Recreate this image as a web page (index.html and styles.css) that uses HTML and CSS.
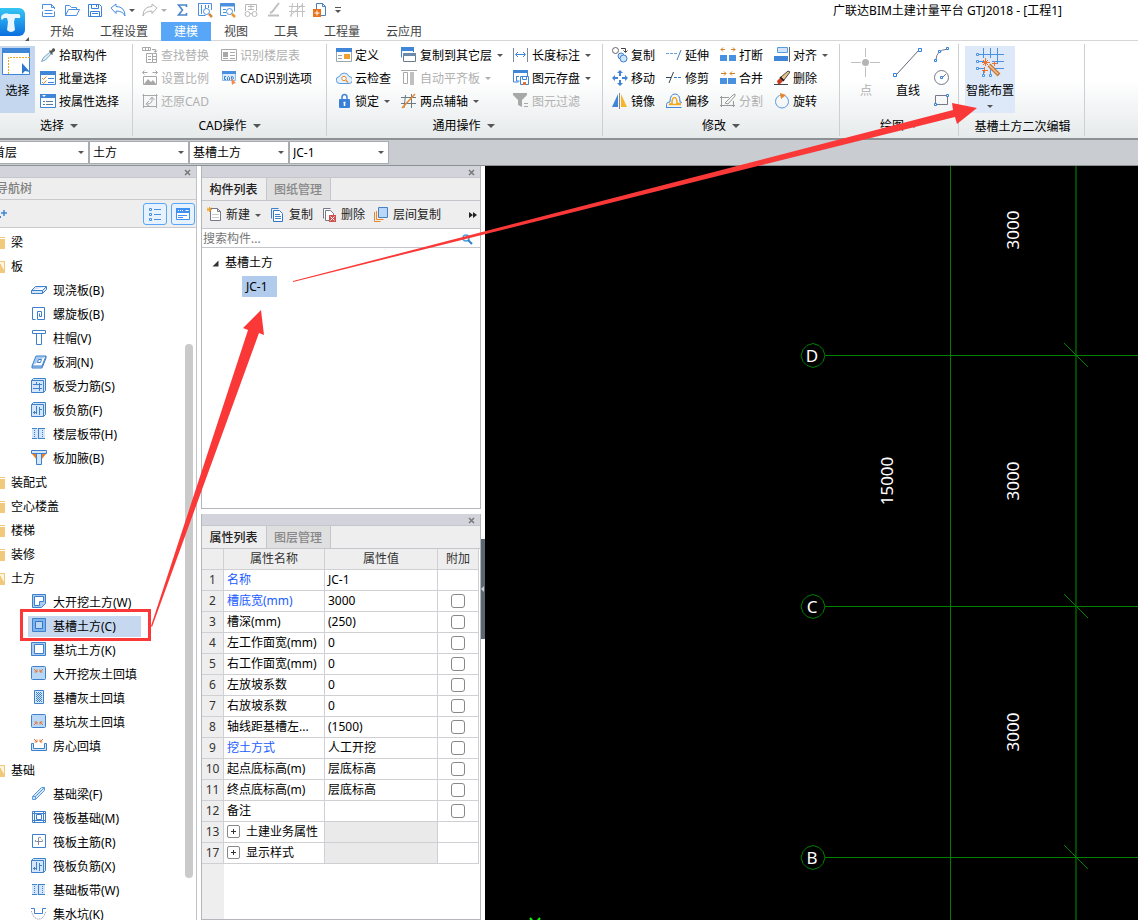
FILE: index.html
```html
<!DOCTYPE html>
<html lang="zh-CN">
<head>
    <meta charset="UTF-8">
    <meta name="viewport" content="width=device-width, initial-scale=1.0">
    <title>广联达BIM土建计量平台 GTJ2018 - [工程1]</title>
    <link rel="stylesheet" href="styles.css">
</head>
<body>
    <header class="top">
        <button class="logo" aria-label="主菜单">
            <svg width="36" height="36" viewBox="0 0 36 36">
                <defs><linearGradient id="lg" x1="0" y1="0" x2="0" y2="1"><stop offset="0" stop-color="#35c6f4"/><stop offset="1" stop-color="#0b6fe0"/></linearGradient></defs>
                <rect x="2" y="2" width="30" height="28" rx="6" fill="url(#lg)"/>
                <path d="M9 9q4-3 7-1h9q3 0 2 4h-5l-1 4 1 8q-4 4-8 0l1-8-1-4h-3l-2 2q-2-2 0-5z" fill="#eaf6ff"/>
                <path d="M36 31v5h-5z" fill="#555"/>
            </svg>
        </button>
        <div class="top-center">
            <div class="quick">
                <button aria-label="新建"><svg class="ic" viewBox="0 0 16 16"><path d="M1.500 7V2.500h9l3 3V7M10.500 2.500v3h3M1.500 9.500v5h12v-5M3.500 8.500h8M3.500 11.500h8" fill="none" stroke="#4a8fe0"/></svg></button>
                <button aria-label="打开"><svg class="ic" viewBox="0 0 16 16"><path d="M1.500 13.500v-10h4l2 2h5v2M1.500 13.500l3-6h11l-3 6z" fill="none" stroke="#4a8fe0"/></svg></button>
                <button aria-label="保存"><svg class="ic" viewBox="0 0 16 16"><path d="M1.500 2.500h11l2 2v10h-13zM4.500 2.500v4h7v-4M3.500 14.500v-5h9v5M9.500 3v2M5 11.500h6" fill="none" stroke="#3a80d8"/></svg></button>
                <button aria-label="撤销"><svg class="ic" viewBox="0 0 16 16"><path d="M1 6l5-4v2.500q9 0 9 9.500-2-5-9-5v2.500z" fill="#fff" stroke="#4a8fe0"/></svg><i class="caret"></i></button>
                <button class="off" aria-label="重做"><svg class="ic" viewBox="0 0 16 16"><path d="M15 6l-5-4v2.500q-9 0-9 9.500 2-5 9-5v2.500z" fill="#fff" stroke="#b4b4b4"/></svg><i class="caret"></i></button>
                <button aria-label="汇总计算"><svg class="ic" viewBox="0 0 16 16"><path d="M12.500 5V3h-8l4 5-4 5h8v-2" fill="none" stroke="#4a86cc" stroke-width="1.600"/></svg></button>
                <button aria-label="查看工程量"><svg class="ic" viewBox="0 0 16 16"><path d="M2 1.500h12.500V8M4.500 3v9M8.500 3v7M1.500 1v12.500h7M11.500 3v3" fill="none" stroke="#4a8fe0"/><circle cx="9.500" cy="9.500" r="3" fill="#fff" stroke="#4a8fe0"/><path d="M12 12l3 3" stroke="#d9863a" stroke-width="2.500"/></svg></button>
                <button aria-label="查看计算式"><svg class="ic" viewBox="0 0 16 16"><path d="M.500 1.500h14v3h-14z" fill="#4a8fe0"/><path d="M.500 1.500h14v8M.500 1.500v12h6M3 7.500h3M3 10.500h3" fill="none" stroke="#4a8fe0"/><circle cx="9.500" cy="9.500" r="3" fill="#fff" stroke="#4a8fe0"/><path d="M12 12l3 3" stroke="#e89a2c" stroke-width="2.500"/></svg></button>
                <button class="off" aria-label="查看三维"><svg class="ic" viewBox="0 0 16 16"><path d="M2.500 9V2.500h11V9M5 4.500h6M8 3v5M5 7.500h6M7 11.500h2" fill="none" stroke="#b8b8b8"/><circle cx="4.500" cy="12" r="2.500" fill="none" stroke="#b8b8b8"/><circle cx="11.500" cy="12" r="2.500" fill="none" stroke="#b8b8b8"/></svg></button>
                <button class="off" aria-label="编辑"><svg class="ic" viewBox="0 0 16 16"><path d="M13 1L6 10l-2 1M2 13.500h11" fill="none" stroke="#c0c0c0" stroke-width="2"/></svg></button>
                <button class="off" aria-label="轴网"><svg class="ic" viewBox="0 0 16 16"><path d="M3.500 1L2 15M8.500 1v14M13.500 1v14M0 4.500h16M0 9.500h16M1 14L14 2" fill="none" stroke="#c0c0c0"/></svg></button>
                <button aria-label="添加"><svg class="ic" viewBox="0 0 16 16"><path d="M4.500 7V1.500h6l3 3v9H9M10.500 1.500v3h3" fill="none" stroke="#4a7fc0"/><path d="M1 7h8v8H1z" fill="#e8721c"/><path d="M5 8.500v5M2.500 11h5" stroke="#fff"/></svg></button>
                <button class="more" aria-label="自定义快速访问"><i class="bar"></i><i class="caret"></i></button>
            </div>
            <nav class="tabs">
                <a href="#">开始</a><a href="#">工程设置</a><a href="#" class="on">建模</a><a href="#">视图</a><a href="#">工具</a><a href="#">工程量</a><a href="#">云应用</a>
            </nav>
        </div>
        <h1>广联达BIM土建计量平台 GTJ2018 - [工程1]</h1>
    </header>

    <section class="ribbon">
        <div class="group g-select">
            <div class="tools">
                <button class="big active">
                    <svg width="32" height="32" viewBox="0 0 32 32"><path d="M.500 2.500h27v26H.500z" fill="#fff" stroke="#3f86d8"/><path d="M0 2h28v5H0z" fill="#3f86d8"/><path d="M6.500 28V11.500H28" fill="none" stroke="#f0a820" stroke-dasharray="2 1"/><path d="M20 17v11l3-3 5 1z" fill="#2e78cc"/></svg>
                    <span>选择</span>
                </button>
                <div class="col">
                    <button><svg class="ic" viewBox="0 0 16 16"><path d="M1.500 14.500l2-4 6-5 1.500 1.500-5.500 6z" fill="#d8ecf8" stroke="#7fa8c0"/><path d="M9 4l1-1 1 1 2-3 2 1v2l-3 2 1 1-1 1z" fill="#555"/></svg>拾取构件</button>
                    <button><svg class="ic" viewBox="0 0 16 16"><path d="M.500 1.500h15v13H.500z" fill="#fff" stroke="#3f86d8"/><path d="M0 1h16v4H0z" fill="#3f86d8"/><path d="M8 8.500h6M8 12.500h6" stroke="#3f86d8"/><path d="M2 8l1.500 1.500 3-3M2 12l1.500 1.500 3-3" fill="none" stroke="#e8862c"/></svg>批量选择</button>
                    <button><svg class="ic" viewBox="0 0 16 16"><path d="M.500 1.500h15v13H.500z" fill="#fff" stroke="#3f86d8"/><path d="M0 1h16v4H0z" fill="#3f86d8"/><path d="M2 2h4L4 4z" fill="#fff"/><path d="M3 8.500h2M6 8.500h7M3 11.500h2M6 11.500h7" stroke="#5a7a98"/></svg>按属性选择</button>
                </div>
            </div>
            <p>选择<i class="caret"></i></p>
        </div>
        <div class="group g-cad">
            <div class="tools">
                <div class="col">
                    <button class="off"><svg class="ic" viewBox="0 0 16 16"><path d="M.500.500h8v3h-8zM3.500 .500v3M6.500 .500v3M10 2.500h3.500V5M12 3.500l1.500 2L15 3.500M4.500 6.500h6v9h-6zM10.500 6.500h4v9h-4M6 9.500h3M6 12.500h3M11 9.500h3M11 12.500h3" fill="none" stroke="#a8a8a8"/></svg>查找替换</button>
                    <button class="off"><svg class="ic" viewBox="0 0 16 16"><path d="M.500 2.500h5M10.500 2.500h5M2.500.500l-2 2 2 2M13.500.500l2 2-2 2M1.500 6.500h13v8h-13z" fill="none" stroke="#a8a8a8"/><path d="M2 14l4-5 3 3 2-2 3 4z" fill="#a8a8a8"/></svg>设置比例</button>
                    <button class="off"><svg class="ic" viewBox="0 0 16 16"><path d="M.500 2.500h15M1.500 1v14M14.500 1v14M1 13.500h14M5 11q6 0 5-6M7.500 7l2.500-3 2.500 3M7 8l-3 3 3 2" fill="none" stroke="#a8a8a8"/></svg>还原CAD</button>
                </div>
                <div class="col">
                    <button class="off"><svg class="ic" viewBox="0 0 16 16"><path d="M.500 2.500h15v11H.500zM9 5.500h5M9 8.500h5M9 11.500h5" fill="none" stroke="#a8a8a8"/><path d="M2 5h5v5H2zM2 11h5v1H2z" fill="#a8a8a8"/></svg>识别楼层表</button>
                    <button><svg class="ic" viewBox="0 0 16 16"><path d="M1.500 1.500h13v9h-13z" fill="#dcebfa" stroke="#8fbcec"/><path d="M1 1h14v3H1z" fill="#4a90e0"/><path d="M5 6.500H3.500v3H5M6.500 10V7.500l1-1 1 1V10M10.500 6.500h1l1 1.500-1 1.500h-1z" fill="none" stroke="#3a80d0"/><path d="M10 8l5 5-2 .5L11 15z" fill="#f08a50"/></svg>CAD识别选项</button>
                </div>
            </div>
            <p>CAD操作<i class="caret"></i></p>
        </div>
        <div class="group g-common">
            <div class="tools">
                <div class="col">
                    <button><svg class="ic" viewBox="0 0 16 16"><path d="M.500 1.500h15v13H.500z" fill="#fff" stroke="#9aa6b2"/><path d="M0 1h16v4H0z" fill="#3f86d8"/><path d="M2 8.500h4M2 11.500h4" stroke="#9aa6b2"/><path d="M8 7h6v5H8z" fill="#f0a030"/></svg>定义</button>
                    <button><svg class="ic" viewBox="0 0 16 16"><path d="M4 13.500a3.500 3.500 0 0 1-.500-7 5 5 0 0 1 9.500 0 3.500 3.500 0 0 1 0 7H4" fill="#e4f1fd" stroke="#5a9ae0"/><circle cx="8" cy="8.500" r="2.200" fill="#fff" stroke="#e8862c"/><path d="M10 10.500l2 2" stroke="#e8862c" stroke-width="1.500"/></svg>云检查</button>
                    <button><svg class="ic" viewBox="0 0 16 16"><path d="M6 7V4.500a2.500 3 0 0 1 5 0V7" fill="none" stroke="#3f86d8" stroke-width="1.500"/><rect x="3" y="6" width="11" height="9" rx="1" fill="#3a80d8"/><path d="M8.500 9v4M7.500 9.500h2" stroke="#fff" stroke-width="1.500"/></svg>锁定<i class="caret"></i></button>
                </div>
                <div class="col">
                    <button><svg class="ic" viewBox="0 0 16 16"><path d="M.500 10.500v-9h12V5" fill="#fff" stroke="#3f86d8"/><path d="M0 0h13v4H0z" fill="#3f86d8"/><path d="M2.500 6.500h12v8h-12z" fill="#fff" stroke="#6a7a88"/><path d="M2 6h13v3H2z" fill="#6a8aa8"/></svg>复制到其它层<i class="caret"></i></button>
                    <button class="off"><svg class="ic" viewBox="0 0 16 16"><path d="M0 .500h16M2.500 2.500h4v11h-4z" fill="none" stroke="#a8a8a8"/><path d="M9 2h4v13H9z" fill="#c0c0c0"/></svg>自动平齐板<i class="caret"></i></button>
                    <button><svg class="ic" viewBox="0 0 16 16"><path d="M4.500 2L3 15M10.500 1v14M0 4.500h15M0 10.500h15" stroke="#6a7a88" fill="none"/><path d="M1 15L14 1" stroke="#e8862c" stroke-width="1.500"/></svg>两点辅轴<i class="caret"></i></button>
                </div>
                <div class="col">
                    <button><svg class="ic" viewBox="0 0 16 16"><path d="M.500 1v14M14.500 1v14" stroke="#7a8a98"/><path d="M3 7.500h9M5 5L2.500 7.500 5 10M10 5l2.500 2.500L10 10" fill="none" stroke="#3f86d8"/></svg>长度标注<i class="caret"></i></button>
                    <button><svg class="ic" viewBox="0 0 16 16"><path d="M.500 12V1.500h14V6M3 6.500h3M3.500 6v5h3M.500 12h5" fill="none" stroke="#3f86d8"/><path d="M0 0h15v3H0z" fill="#3f86d8"/><path d="M7.500 6.500h8v8h-8z" fill="#fff" stroke="#3f86d8"/><path d="M9.500 6.500v3h4v-3" fill="none" stroke="#3f86d8"/><path d="M10 12h3v3h-3z" fill="#e8722c"/></svg>图元存盘<i class="caret"></i></button>
                    <button class="off"><svg class="ic" viewBox="0 0 16 16"><path d="M0 0h14v2L9 7v7l-4-2V7L0 2z" fill="#a8a8a8"/><path d="M11 10.500h4M11 13.500h4" stroke="#a8a8a8"/></svg>图元过滤</button>
                </div>
            </div>
            <p>通用操作<i class="caret"></i></p>
        </div>
        <div class="group g-modify">
            <div class="tools">
                <div class="col">
                    <button><svg class="ic" viewBox="0 0 16 16"><circle cx="3.500" cy="3.500" r="3" fill="#fff" stroke="#666"/><path d="M9 1.500h4.500V5M11.500 3.500l2 2 2-2" fill="none" stroke="#444"/><circle cx="9" cy="9" r="3" fill="#cfe4f8" stroke="#3a80d0"/><circle cx="11.500" cy="11.500" r="3.500" fill="#cfe4f8" stroke="#3a80d0"/></svg>复制</button>
                    <button><svg class="ic" viewBox="0 0 16 16"><path d="M8 0l3 3H9v3H7V3H5zM8 16l3-3H9v-3H7v3H5zM0 8l3-3v2h3v2H3v2zM16 8l-3-3v2h-3v2h3v2z" fill="#4284d4"/></svg>移动</button>
                    <button><svg class="ic" viewBox="0 0 16 16"><path d="M6 1v13H0z" fill="#3f86d8"/><path d="M7.500 0v16" stroke="#888"/><path d="M9 1v13h6z" fill="#f5b52e"/></svg>镜像</button>
                </div>
                <div class="col">
                    <button><svg class="ic" viewBox="0 0 16 16"><path d="M0 6.500h11" stroke="#6a9fd8" stroke-dasharray="3 1"/><path d="M11 13l4-10" stroke="#4a80b8"/></svg>延伸</button>
                    <button><svg class="ic" viewBox="0 0 16 16"><path d="M0 7.500h5M3 13L7.500 2" stroke="#345"/><path d="M8 7.500h8" stroke="#2f78d0" stroke-dasharray="3 1"/></svg>修剪</button>
                    <button><svg class="ic" viewBox="0 0 16 16"><path d="M0 14.500h15.500M.500 14q-1-5 3.500-5 0-8 5-8t5 8q2 0 2 1" fill="none" stroke="#3f86d8"/><path d="M15 11.500H3.500q0-1 2.500-1 0-6 2.500-6t2.500 6h4" fill="none" stroke="#f0a820" stroke-width="1.500"/></svg>偏移</button>
                </div>
                <div class="col">
                    <button><svg class="ic" viewBox="0 0 16 16"><path d="M0 8h7v6H0zM9 8h7v6H9z" fill="#4a90e0"/><path d="M5 2.500H1M3 .500l-2 2 2 2M11 2.500h4M13 .500l2 2-2 2" fill="none" stroke="#d08020"/></svg>打断</button>
                    <button><svg class="ic" viewBox="0 0 16 16"><path d="M0 8h7v6H0zM8 8h8v6H8z" fill="#4a90e0"/><path d="M1 3.500h5M4 1.500l2 2-2 2M15 3.500h-5M12 1.500l-2 2 2 2" fill="none" stroke="#d08020"/></svg>合并</button>
                    <button class="off"><svg class="ic" viewBox="0 0 16 16"><path d="M0 4.500h9M1.500 3v11M13.500 8v6M0 12.500h15M5 10l8-8 2-1v2l-7 8z" fill="none" stroke="#999"/></svg>分割</button>
                </div>
                <div class="col">
                    <button><svg class="ic" viewBox="0 0 16 16"><path d="M3.500.500h10v5h-10z" fill="#cfe4f8" stroke="#5a9ae0"/><path d="M0 9h14v5H0z" fill="#3f86d8"/><path d="M15.500 0v15" stroke="#666"/></svg>对齐<i class="caret"></i></button>
                    <button><svg class="ic" viewBox="0 0 16 16"><path d="M0 14.500h14" stroke="#444"/><path d="M7 7l7-6 2 1-6 8z" fill="#e8c48c" stroke="#444"/><path d="M3 11l4-4 3 3-4 4H4z" fill="#c83c20"/><path d="M6 7l4 4" stroke="#222" stroke-width="1.500"/></svg>删除</button>
                    <button><svg class="ic" viewBox="0 0 16 16"><circle cx="8" cy="8.500" r="6.500" fill="none" stroke="#5a9ae0"/><path d="M6 0l6 2-5 4z" fill="#e8862c"/></svg>旋转</button>
                </div>
            </div>
            <p>修改<i class="caret"></i></p>
        </div>
        <div class="group g-draw">
            <div class="tools">
                <button class="big off"><svg width="32" height="32" viewBox="0 0 32 32"><path d="M1 16.500h10M20 16.500h10M15.500 2v9M15.500 21v10" stroke="#c0c0c0"/><circle cx="15.500" cy="16.500" r="3.500" fill="#b4b4b4"/></svg><span>点</span></button>
                <button class="big"><svg width="32" height="32" viewBox="0 0 32 32"><path d="M4 29L27 4" stroke="#667"/><path d="M1.500 27.500h3v3h-3zM26.500 2.500h3v3h-3z" fill="#fff" stroke="#2f80e0"/></svg><span>直线</span></button>
                <div class="col">
                    <button aria-label="弧线"><svg class="ic" viewBox="0 0 16 16"><path d="M2 13Q2 3 14 2" fill="none" stroke="#778"/><path d="M.500 12.500h2v2h-2zM4.500 3.500h2v2h-2zM12.500.500h2v2h-2z" fill="#fff" stroke="#2f80e0"/></svg></button>
                    <button aria-label="圆"><svg class="ic" viewBox="0 0 16 16"><circle cx="7.500" cy="7.500" r="7" fill="none" stroke="#778"/><path d="M8 8l4-4" stroke="#778"/><path d="M6.500 6.500h2v2h-2z" fill="#fff" stroke="#2f80e0"/></svg></button>
                    <button aria-label="矩形"><svg class="ic" viewBox="0 0 16 16"><path d="M1.500 2.500h12v9h-12z" fill="none" stroke="#778"/><path d="M.500 10.500h2v2h-2zM12.500 1.500h2v2h-2z" fill="#fff" stroke="#2f80e0"/></svg></button>
                </div>
            </div>
            <p>绘图<i class="caret"></i></p>
        </div>
        <div class="group g-edit">
            <div class="tools">
                <button class="big hover"><svg width="32" height="32" viewBox="0 0 32 32"><path d="M3 8.500h27M3 15.500h8M18 15.500h12M3 22.500h8M20 22.500h10M9.500 2v10M16.500 2v10M23.500 2v16M9.500 24v4M16.500 20v8" stroke="#4a90e0"/><path d="M2.500 7.500h2v2h-2zM2.500 14.500h2v2h-2zM2.500 21.500h2v2h-2zM8.500 28.500h2v2h-2zM15.500 28.500h2v2h-2z" fill="#fff" stroke="#4a90e0"/><path d="M15 19l10 10" stroke="#c87838" stroke-width="4"/><path d="M15 19l9 9" stroke="#f4c090" stroke-width="1.500"/><path d="M9 14l5 5M14 14l-5 5M11.500 12v8M8 16.500h8M20.500 15v5M18 17.500h5M10.500 21v6M8 24.500h6" stroke="#f07030"/></svg><span>智能布置</span><i class="caret"></i></button>
            </div>
            <p>基槽土方二次编辑</p>
        </div>
    </section>

    <section class="picker">
        <label class="combo"><select aria-label="楼层"><option>首层</option></select></label>
        <label class="combo"><select aria-label="构件类别"><option>土方</option></select></label>
        <label class="combo"><select aria-label="构件类型"><option>基槽土方</option></select></label>
        <label class="combo"><select aria-label="构件"><option>JC-1</option></select></label>
    </section>

    <main>
        <aside class="nav">
            <div class="grip"><button aria-label="关闭导航树"><svg width="7" height="7" viewBox="0 0 7 7"><path d="M1 1l5 5M6 1L1 6" stroke="#777" stroke-width="1.500"/></svg></button></div>
            <h2>导航树</h2>
            <div class="nav-tools">
                <svg width="8" height="12" viewBox="0 0 8 12"><path d="M4 2v6M1 5h6" stroke="#3f86d8" stroke-width="1.500"/><path d="M0 8h1v2H0z" fill="#3f86d8"/></svg>
                <button aria-label="列表视图"><svg class="ic" viewBox="0 0 16 16"><path d="M2.500 2.500h2v2h-2zM2.500 7.500h2v2h-2zM2.500 12.500h2v2h-2zM7 3.500h7M7 8.500h7M7 13.500h7" fill="none" stroke="#4a90e0"/></svg></button>
                <button aria-label="面板视图"><svg class="ic" viewBox="0 0 16 16"><path d="M1.500 2.500h13v11h-13z" fill="#fff" stroke="#3f90f0"/><path d="M1 2h14v5H1z" fill="#3f90f0"/><path d="M3 9.500h9M3 11.500h5" stroke="#3f90f0"/><path d="M3 4.500h1M5 4.500h1M7 4.500h1M10.500 4.500h3" stroke="#fff"/></svg></button>
            </div>
            <div class="nav-body">
                <ul class="tree">
                    <li class="dir"><a href="#">梁</a></li>
                    <li class="dir open"><a href="#">板</a></li>
                    <li><a href="#"><svg class="ic" viewBox="0 0 16 16"><path d="M.500 8.500l4-4h11v3l-4 4H.500zM.500 8.500h11l4-4M11.500 8.500v3" fill="#d4e6f8" stroke="#3f80cc"/></svg>现浇板(B)</a></li>
                    <li><a href="#"><svg class="ic" viewBox="0 0 16 16"><path d="M4.500 13.500h-3v-12h12v12h-7v-8h4v5h-2v-3" fill="none" stroke="#3f80cc"/></svg>螺旋板(B)</a></li>
                    <li><a href="#"><svg class="ic" viewBox="0 0 16 16"><path d="M1.500.500h13v3h-13zM5.500 3.500h5v11h-5z" fill="#fff" stroke="#3f80cc"/></svg>柱帽(V)</a></li>
                    <li><a href="#"><svg class="ic" viewBox="0 0 16 16"><path d="M1 12l4-10h10l-4 10zM1 12v2h10l4-10V2" fill="#a8cbee" stroke="#3f80cc"/><path d="M6.500 8.500l1-3h3l-1 3z" fill="#fff" stroke="#3f80cc"/></svg>板洞(N)</a></li>
                    <li><a href="#"><svg class="ic" viewBox="0 0 16 16"><path d="M.500 2.500h12v12h-12zM.500 2.500l2-2h12v12l-2 2M2 6.500h9M2 10.500h9M5.500 4v3M8.500 5v8" fill="#d4e6f8" stroke="#3f80cc"/></svg>板受力筋(S)</a></li>
                    <li><a href="#"><svg class="ic" viewBox="0 0 16 16"><path d="M.500 2.500h12v12h-12zM.500 2.500l2-2h12v12l-2 2M5.500 4v8M8.500 5v8M2 10.500h3M8 7.500h3M3.500 12v-3" fill="#d4e6f8" stroke="#3f80cc"/></svg>板负筋(F)</a></li>
                    <li><a href="#"><svg class="ic" viewBox="0 0 16 16"><path d="M1 2h13v11H1z" fill="#d4e6f8"/><path d="M1 2.500h5M7 2.500h7M1 12.500h5M7 12.500h7M7.500 3v10" stroke="#3f80cc"/><path d="M3.500 4v8M11.500 4v8" stroke="#3f80cc" stroke-dasharray="1 1"/></svg>楼层板带(H)</a></li>
                    <li><a href="#"><svg class="ic" viewBox="0 0 16 16"><path d="M1 4l5 6V4zM15 4l-5 6V4z" fill="#f08020"/><path d="M.500.500h15v3H.500zM5.500 3.500h5v11h-5z" fill="#d4e6f8" stroke="#3f80cc"/></svg>板加腋(B)</a></li>
                    <li class="dir"><a href="#">装配式</a></li>
                    <li class="dir"><a href="#">空心楼盖</a></li>
                    <li class="dir"><a href="#">楼梯</a></li>
                    <li class="dir"><a href="#">装修</a></li>
                    <li class="dir open"><a href="#">土方</a></li>
                    <li><a href="#"><svg class="ic" viewBox="0 0 16 16"><path d="M1.500.500h13v9l-4 4h-9z" fill="#a8cbee" stroke="#3f80cc"/><path d="M3.500 2.500h9v5h-4v4h-5z" fill="#fff" stroke="#3f80cc"/></svg>大开挖土方(W)</a></li>
                    <li class="sel"><a href="#"><svg class="ic" viewBox="0 0 16 16"><path d="M1.500.500h13v13h-13z" fill="#7fb2ea" stroke="#3f80cc"/><path d="M4.500 3.500h7v7h-7z" fill="#b8d8f6" stroke="#2f78c8"/></svg>基槽土方(C)</a></li>
                    <li><a href="#"><svg class="ic" viewBox="0 0 16 16"><path d="M.500.500h14v13H.500z" fill="#a8cbee" stroke="#3f80cc"/><path d="M3.500 2.500h9v9h-9z" fill="#fff" stroke="#3f80cc"/></svg>基坑土方(K)</a></li>
                    <li><a href="#"><svg class="ic" viewBox="0 0 16 16"><rect x=".500" y=".500" width="14" height="13" rx="1" fill="#b8d8f6" stroke="#3f80cc"/><path d="M3 3l3 3M6 3.500V6H3.500M12 3L9 6M9 3.500V6h2.500" fill="none" stroke="#e8722c"/></svg>大开挖灰土回填</a></li>
                    <li><a href="#"><svg class="ic" viewBox="0 0 16 16"><path d="M3.500.500h9v13h-9z" fill="#d4e6f8" stroke="#3f80cc"/><path d="M5.500 2v10M7.500 2v10M9.500 2v10" stroke="#3f80cc" stroke-dasharray="1 1"/><path d="M6.500 3v9M8.500 3v9M10.500 3v9" stroke="#3f80cc" stroke-dasharray="1 1"/></svg>基槽灰土回填</a></li>
                    <li><a href="#"><svg class="ic" viewBox="0 0 16 16"><rect x=".500" y=".500" width="14" height="13" rx="1" fill="#b8d8f6" stroke="#3f80cc"/><path d="M3 11l3-3M3.500 8H6v2.500M12 11L9 8M9 10.500V8h2.500" fill="none" stroke="#e8722c"/></svg>基坑灰土回填</a></li>
                    <li><a href="#"><svg class="ic" viewBox="0 0 16 16"><path d="M.500 5.500h2v5h11v-5h2v7H.500z" fill="#d4e6f8" stroke="#3f80cc"/><path d="M3 1l3 3M6 1.500V4H3.500M12 1L9 4M9 1.500V4h2.500" fill="none" stroke="#e8722c"/></svg>房心回填</a></li>
                    <li class="dir open"><a href="#">基础</a></li>
                    <li><a href="#"><svg class="ic" viewBox="0 0 16 16"><path d="M1.500 10.500l9-9h3v3l-9 9h-3z" fill="#d4e6f8" stroke="#5a9ae0"/><path d="M1.500 10.500h3v3M4.500 10.500l9-9" fill="none" stroke="#5a9ae0"/></svg>基础梁(F)</a></li>
                    <li><a href="#"><svg class="ic" viewBox="0 0 16 16"><path d="M1.500 1.500h13v11h-13zM5.500 4.500h5v5h-5zM3.500 1v12M12.500 1v12M1 3.500h14M1 10.500h14" fill="none" stroke="#3f80cc"/></svg>筏板基础(M)</a></li>
                    <li><a href="#"><svg class="ic" viewBox="0 0 16 16"><path d="M1.500.500h13v13h-13z" fill="#fff" stroke="#3f80cc"/><path d="M10 4q-2-2-2.500 0v7M4.500 6q-1 2 1 1.500h6q1-1-1-2" fill="none" stroke="#889"/></svg>筏板主筋(R)</a></li>
                    <li><a href="#"><svg class="ic" viewBox="0 0 16 16"><path d="M.500 2.500h12v12h-12zM.500 2.500l2-2h12v12l-2 2M5.500 4v8M8.500 5v8M2 10.500h3M8 7.500h3M3.500 12v-3" fill="#d4e6f8" stroke="#3f80cc"/></svg>筏板负筋(X)</a></li>
                    <li><a href="#"><svg class="ic" viewBox="0 0 16 16"><path d="M1 2h13v11H1z" fill="#d4e6f8"/><path d="M1 2.500h5M7 2.500h7M1 12.500h5M7 12.500h7M7.500 3v10" stroke="#3f80cc"/><path d="M3.500 4v8M11.500 4v8" stroke="#3f80cc" stroke-dasharray="1 1"/></svg>基础板带(W)</a></li>
                    <li><a href="#"><svg class="ic" viewBox="0 0 16 16"><path d="M0 2.500h3.500v5h8v-5H15" fill="none" stroke="#3f80cc"/><path d="M0 5l3 6 3 2h4l3-3 2-5" fill="none" stroke="#889" stroke-dasharray="1 1"/></svg>集水坑(K)</a></li>
                </ul>
                <div class="track"><div class="thumb"></div></div>
            </div>
        </aside>

        <div class="side">
            <section class="panel list-panel">
                <div class="grip"><button aria-label="关闭构件列表"><svg width="7" height="7" viewBox="0 0 7 7"><path d="M1 1l5 5M6 1L1 6" stroke="#777" stroke-width="1.500"/></svg></button></div>
                <div class="ptabs"><button class="on">构件列表</button><button>图纸管理</button></div>
                <div class="bar-tools">
                    <button><svg class="ic" viewBox="0 0 16 16"><path d="M3.500 1.500h7l3 3v9h-10zM10.500 1.500v3h3" fill="#fff" stroke="#778"/><path d="M5 7.500h7M5 10.500h7" stroke="#ccc"/><path d="M0 .500l4 4M4 .500l-4 4M2.500 0v5M0 2.500h5" stroke="#f0a020"/></svg>新建<i class="caret"></i></button>
                    <button><svg class="ic" viewBox="0 0 16 16"><path d="M1.500 11.500v-10h7" fill="none" stroke="#3f80cc"/><path d="M3.500 3.500h6l3 3v8h-9z" fill="#fff" stroke="#2f78c8"/><path d="M5 7.500h5M5 9.500h6M5 11.500h6" stroke="#3f80cc"/></svg>复制</button>
                    <button><svg class="ic" viewBox="0 0 16 16"><path d="M1.500 11.500v-10h7M3.500 3.500h5l3 3v7h-8z" fill="#fff" stroke="#778"/><path d="M7 8h7v7H7z" fill="#d05050"/><path d="M8.500 9.500l4 4M12.500 9.500l-4 4" stroke="#fff"/></svg>删除</button>
                    <button><svg class="ic" viewBox="0 0 16 16"><path d="M.500 5v9.500h6M2.500 4v8.500h7" fill="none" stroke="#e8862c"/><path d="M4.500.500h9v10h-9z" fill="#b8d8fa" stroke="#4a80c0"/></svg>层间复制</button>
                    <button class="expand" aria-label="更多"><svg width="8" height="6" viewBox="0 0 8 6"><path d="M0 0l4 3-4 3zM4 0l4 3-4 3z" fill="#222"/></svg></button>
                </div>
                <div class="search">
                    <input type="text" placeholder="搜索构件..." aria-label="搜索构件">
                    <svg width="12" height="12" viewBox="0 0 12 12"><circle cx="5" cy="5" r="3" fill="none" stroke="#4aa0d8" stroke-width="1.500"/><path d="M7 7l4 4" stroke="#2f80c8" stroke-width="2"/></svg>
                </div>
                <ul class="comp">
                    <li><svg width="7" height="7" viewBox="0 0 7 7"><path d="M6.500.500v6h-6z" fill="#333"/></svg>基槽土方
                        <ul><li><a href="#">JC-1</a></li></ul>
                    </li>
                </ul>
            </section>

            <section class="panel prop-panel">
                <div class="grip"><button aria-label="关闭属性列表"><svg width="7" height="7" viewBox="0 0 7 7"><path d="M1 1l5 5M6 1L1 6" stroke="#777" stroke-width="1.500"/></svg></button></div>
                <div class="ptabs"><button class="on">属性列表</button><button>图层管理</button></div>
                <table>
                    <thead>
                        <tr><th class="num"></th><th class="name">属性名称</th><th class="val">属性值</th><th class="add">附加</th></tr>
                    </thead>
                    <tbody>
                        <tr><th>1</th><td class="key">名称</td><td>JC-1</td><td></td></tr>
                        <tr><th>2</th><td class="key">槽底宽(mm)</td><td>3000</td><td><input type="checkbox" aria-label="附加 槽底宽"></td></tr>
                        <tr><th>3</th><td>槽深(mm)</td><td>(250)</td><td><input type="checkbox" aria-label="附加 槽深"></td></tr>
                        <tr><th>4</th><td>左工作面宽(mm)</td><td>0</td><td><input type="checkbox" aria-label="附加 左工作面宽"></td></tr>
                        <tr><th>5</th><td>右工作面宽(mm)</td><td>0</td><td><input type="checkbox" aria-label="附加 右工作面宽"></td></tr>
                        <tr><th>6</th><td>左放坡系数</td><td>0</td><td><input type="checkbox" aria-label="附加 左放坡系数"></td></tr>
                        <tr><th>7</th><td>右放坡系数</td><td>0</td><td><input type="checkbox" aria-label="附加 右放坡系数"></td></tr>
                        <tr><th>8</th><td>轴线距基槽左...</td><td>(1500)</td><td><input type="checkbox" aria-label="附加 轴线距基槽左"></td></tr>
                        <tr><th>9</th><td class="key">挖土方式</td><td>人工开挖</td><td><input type="checkbox" aria-label="附加 挖土方式"></td></tr>
                        <tr><th>10</th><td>起点底标高(m)</td><td>层底标高</td><td><input type="checkbox" aria-label="附加 起点底标高"></td></tr>
                        <tr><th>11</th><td>终点底标高(m)</td><td>层底标高</td><td><input type="checkbox" aria-label="附加 终点底标高"></td></tr>
                        <tr><th>12</th><td>备注</td><td></td><td><input type="checkbox" aria-label="附加 备注"></td></tr>
                        <tr><th>13</th><td><button class="plus" aria-label="展开"></button>土建业务属性</td><td class="none"></td><td></td></tr>
                        <tr><th>17</th><td><button class="plus" aria-label="展开"></button>显示样式</td><td class="none"></td><td></td></tr>
                    </tbody>
                </table>
                <div class="rest"></div>
            </section>
        </div>

        <div class="splitter"><button aria-label="折叠面板"></button></div>

        <svg class="canvas" font-size="17">
            <g stroke="#008000" fill="none">
                <path d="M465.500 0v760"/>
                <path d="M591 0v760" stroke="#004800" stroke-width="2"/>
                <path d="M340 189.500h2000M340 440.500h2000M340 691.500h2000"/>
                <path d="M579 177l24 24M579 428l24 24M579 679l24 24"/>
                <g id="bubble"><path d="M328 177.500l6 2 4 4 2 6-2 6-4 4-6 2-6-2-4-4-2-6 2-6 4-4z"/></g>
                <use href="#bubble" y="251"/>
                <use href="#bubble" y="502"/>
            </g>
            <g fill="#fff" text-anchor="middle">
                <text x="327" y="196">D</text>
                <text x="327" y="447">C</text>
                <text x="327" y="698">B</text>
                <text transform="translate(534 64) rotate(-90)">3000</text>
                <text transform="translate(534 315) rotate(-90)">3000</text>
                <text transform="translate(534 566) rotate(-90)">3000</text>
                <text transform="translate(408 315) rotate(-90)">15000</text>
            </g>
            <path d="M45 752l5 6 5-6" fill="none" stroke="#0f0" stroke-width="2"/>
        </svg>
    </main>

    <!-- tutorial arrows -->
    <svg class="marks">
        <path d="M21.500 610.500h128v29h-128z" fill="none" stroke="#fb3838" stroke-width="3"/>
        <path d="M151 626L248 330l-5-2 18-18 3 25-5-2L152 627z" fill="#fb3838"/>
        <path d="M293 281L953 110l-1-7 25 5-20 16-2-7L293 282z" fill="#fb3838"/>
    </svg>
</body>
</html>
```

FILE: styles.css
```css
*, *::before, *::after {
    box-sizing: border-box;
}
body {
    margin: 0;
    height: 100vh;
    display: flex;
    flex-direction: column;
    overflow: hidden;
    position: relative;
    background: #fff;
    color: #000;
    font-family: "Noto Sans", "Noto Sans CJK SC", sans-serif;
    font-size: 12px;
    line-height: 16px;
}
button, input, select {
    font: inherit;
    color: inherit;
    margin: 0;
    padding: 0;
    border: none;
    background: none;
}
button {
    cursor: pointer;
    white-space: nowrap;
}
a {
    color: inherit;
    text-decoration: none;
}
h1, h2, p, ul {
    margin: 0;
    padding: 0;
    font-size: 12px;
    font-weight: normal;
    list-style: none;
}
.ic {
    width: 16px;
    height: 16px;
    flex: none;
}
.caret {
    border: 3px solid transparent;
    border-top-color: #555;
    border-bottom: none;
    flex: none;
}
.off {
    color: #b0b0b0;
}
.off .caret {
    border-top-color: #b0b0b0;
}

/* title bar */
.top {
    display: flex;
    height: 41px;
    flex: none;
    border-bottom: 1px solid #d4d6d8;
}
.logo {
    width: 37px;
    padding-top: 6px;
    flex: none;
    display: flex;
    justify-content: flex-end;
    margin-left: -8px;
}
.top-center {
    flex: none;
    width: 410px;
    padding-left: 8px;
}
.quick {
    display: flex;
    height: 22px;
    padding: 2px 0 0 4px;
    gap: 7px;
}
.quick button {
    display: flex;
    align-items: center;
    gap: 3px;
    height: 16px;
}
.quick .more {
    flex-direction: column;
    justify-content: center;
    gap: 2px;
}
.bar {
    width: 6px;
    height: 1px;
    background: #555;
}
.tabs {
    display: flex;
}
.tabs a {
    height: 19px;
    line-height: 19px;
    padding: 0 13px;
    color: #444;
}
.tabs .on {
    background: #58a6f8;
    color: #fff;
}
.top h1 {
    flex: 1;
    text-align: right;
    padding: 3px 76px 0 0;
    white-space: nowrap;
}

/* ribbon */
.ribbon {
    display: flex;
    flex: none;
    height: 99px;
    padding-top: 3px;
    background: linear-gradient(#fff 40%, #e6eaeb);
    border-bottom: 2px solid #8e9194;
}
.group {
    flex: none;
    height: 92px;
    border-right: 1px solid #ccd0d2;
}
.group p {
    display: flex;
    align-items: center;
    justify-content: center;
    gap: 6px;
    height: 25px;
}
.group p .caret {
    border-width: 4px 4px 0;
}
.tools {
    display: flex;
    gap: 11px;
    height: 69px;
}
.col button {
    display: flex;
    align-items: center;
    height: 23px;
    gap: 3px;
}
.col .ic {
    margin-bottom: 1px;
}
.col .caret {
    margin-left: 2px;
}
.big {
    display: flex;
    flex-direction: column;
    align-items: center;
    height: 67px;
    margin-top: 2px;
}
.big span {
    margin-top: 5px;
}
.big .caret {
    margin-top: 6px;
}
.active {
    background: #c5d7ef;
    width: 35px;
}
.hover {
    background: #dde9f9;
    width: 50px;
}
.g-select {
    width: 133px;
}
.g-select .tools {
    gap: 5px;
}
.g-select p {
    padding-right: 14px;
}
.g-cad {
    width: 194px;
}
.g-cad .tools, .g-modify .tools, .g-common .tools {
    padding-left: 9px;
}
.g-cad .tools {
    gap: 12px;
}
.g-common {
    width: 276px;
}
.g-common .tools {
    gap: 10px;
}
.g-common p {
    padding-right: 2px;
}
.g-modify {
    width: 237px;
}
.g-draw {
    width: 119px;
}
.g-draw .tools {
    padding-left: 10px;
    gap: 10px;
}
.g-edit {
    width: 126px;
}
.g-edit .tools {
    padding-left: 6px;
}
.g-edit p {
    padding: 3px 0 0 2px;
}

/* floor and component selectors */
.picker {
    display: flex;
    flex: none;
    height: 26px;
    padding: 1px 0;
    background: #c9ccd1;
    border-bottom: 1px solid #8e9194;
    margin-left: -11px;
}
.combo {
    position: relative;
    width: 100px;
}
.combo select {
    appearance: none;
    width: 100%;
    height: 23px;
    padding: 0 3px;
    background: #fff;
    border: 1px solid #a8abb0;
    border-radius: 0;
}
.combo::after {
    content: "";
    position: absolute;
    right: 5px;
    top: 10px;
    border: 3px solid transparent;
    border-top-color: #555;
    border-bottom: none;
}

main {
    display: flex;
    flex: 1;
    min-height: 0;
}
.grip {
    display: flex;
    justify-content: flex-end;
    align-items: flex-end;
    height: 12px;
    flex: none;
    padding: 0 5px 1px 0;
    background: #d3d4db;
    border-bottom: 1px solid #c4c6cc;
}
.grip button {
    display: flex;
}

/* navigation tree */
.nav {
    width: 197px;
    flex: none;
    display: flex;
    flex-direction: column;
    border-right: 1px solid #c0c2c8;
}
.nav h2 {
    height: 22px;
    line-height: 21px;
    background: #eee;
    color: #808080;
    border-bottom: 1px solid #c8cace;
    text-indent: -4px;
    font-weight: 500;
}
.nav-tools {
    display: flex;
    align-items: center;
    gap: 4px;
    height: 28px;
    flex: none;
    padding-right: 1px;
    background: #eee;
    border-bottom: 1px solid #c8cace;
}
.nav-tools > svg {
    margin-right: auto;
}
.nav-tools button {
    width: 24px;
    height: 22px;
    display: flex;
    align-items: center;
    justify-content: center;
    border: 1px solid #58a6f8;
    border-radius: 3px;
    background: #e6f2fd;
}
.nav-body {
    display: flex;
    flex: 1;
    min-height: 0;
    overflow: hidden;
}
.tree {
    flex: 1;
    padding-top: 2px;
}
.tree li {
    height: 24px;
    padding: 2px 0 0 28px;
}
.tree a {
    display: flex;
    align-items: center;
    gap: 6px;
    height: 21px;
    padding-left: 3px;
    width: 113px;
    white-space: nowrap;
}
.tree .ic {
    margin-bottom: 1px;
}
.tree .sel a {
    background: #c6d8ef;
}
.tree .dir {
    padding-left: 0;
}
.tree .dir a {
    padding-left: 0;
}
.tree .dir a::before {
    content: "";
    width: 5px;
    height: 12px;
    background: linear-gradient(#f0c97c 1px, #fff 1px, #fff 2px, #f0c97c 2px);
}
.tree .open a::before {
    background: linear-gradient(60deg, #f0c97c 50%, #fff4dc 55%);
    border: 1px solid #f0c97c;
    border-left: none;
}
.track {
    width: 11px;
    padding-top: 116px;
}
.thumb {
    width: 8px;
    height: 534px;
    border-radius: 4px;
    background: #cacaca;
}

/* middle panels */
.side {
    width: 281px;
    flex: none;
    padding-left: 4px;
    display: flex;
    flex-direction: column;
    gap: 5px;
}
.side .panel {
    width: 280px;
    border: 1px solid #b4b6bc;
    border-top: none;
    display: flex;
    flex-direction: column;
}
.list-panel {
    height: 343px;
    flex: none;
}
.prop-panel {
    flex: 1;
    min-height: 0;
}
.ptabs {
    display: flex;
    flex: none;
    height: 23px;
    background: #eee;
    border-bottom: 1px solid #c4c6cc;
}
.ptabs button {
    padding: 1px 8px 0 7px;
    background: #dfdfe0;
    color: #888;
    border-right: 1px solid #c4c6cc;
    font-weight: 500;
}
.ptabs .on {
    background: #eee;
    color: #222;
    font-weight: 500;
    width: 65px;
}
.bar-tools {
    display: flex;
    align-items: center;
    gap: 9px;
    height: 28px;
    flex: none;
    padding: 1px 3px 0 5px;
    background: #eee;
    border-bottom: 1px solid #c4c6cc;
    color: #222;
}
.bar-tools button {
    display: flex;
    align-items: center;
    gap: 3px;
}
.bar-tools .caret {
    margin-left: 2px;
}
.bar-tools .expand {
    margin-left: auto;
}
.search {
    display: flex;
    align-items: center;
    height: 19px;
    flex: none;
    padding: 2px 7px 0 1px;
    border-bottom: 1px solid #c4c6cc;
}
.search input {
    flex: 1;
    outline: none;
}
.search input::placeholder {
    color: #777;
}
.comp {
    padding: 3px 0 0 10px;
    line-height: 24px;
}
.comp svg {
    margin-right: 6px;
}
.comp ul {
    padding-left: 30px;
}
.comp a {
    display: inline-block;
    line-height: 21px;
    padding: 0 9px 0 4px;
    background: #b0cbec;
}

table {
    border-collapse: separate;
    border-spacing: 0;
    table-layout: fixed;
    width: 277px;
    flex: none;
}
th, td {
    height: 21px;
    padding: 0 3px;
    text-align: left;
    white-space: nowrap;
    border-right: 1px solid #d0d0d4;
    border-bottom: 1px solid #d0d0d4;
    font-weight: normal;
}
th {
    background: #eee;
    color: #333;
    text-align: center;
    padding: 0;
}
.num {
    width: 22px;
}
.name {
    width: 101px;
}
.val {
    width: 113px;
}
td:last-child {
    text-align: center;
}
.key {
    color: #1a5cff;
}
.none {
    background: #eaeaea;
}
td input {
    appearance: none;
    display: block;
    width: 14px;
    height: 14px;
    margin: 0 auto;
    border: 1px solid #888;
    border-radius: 3px;
    background: #fff;
}
.plus {
    width: 13px;
    height: 13px;
    margin-right: 6px;
    vertical-align: -1px;
    border: 1px solid #888;
    border-radius: 2px;
    background:
        linear-gradient(#333, #333) center / 5px 1px no-repeat,
        linear-gradient(#333, #333) center / 1px 5px no-repeat;
}
.rest {
    flex: 1;
    width: 22px;
    background: #eee;
}

.splitter {
    width: 7px;
    flex: none;
    display: flex;
    padding: 373px 0 0 3px;
}
.splitter button {
    width: 4px;
    height: 100px;
    background: #5c6673;
    display: flex;
    align-items: center;
}
.splitter button::before {
    content: "";
    border: 3px solid transparent;
    border-right: 3px solid #ccd;
    border-left: none;
}
.canvas {
    flex: 1;
    min-width: 0;
    height: 100%;
    background: #000;
}
.marks {
    position: absolute;
    left: 0;
    top: 0;
    width: 100%;
    height: 100%;
    pointer-events: none;
}
```
